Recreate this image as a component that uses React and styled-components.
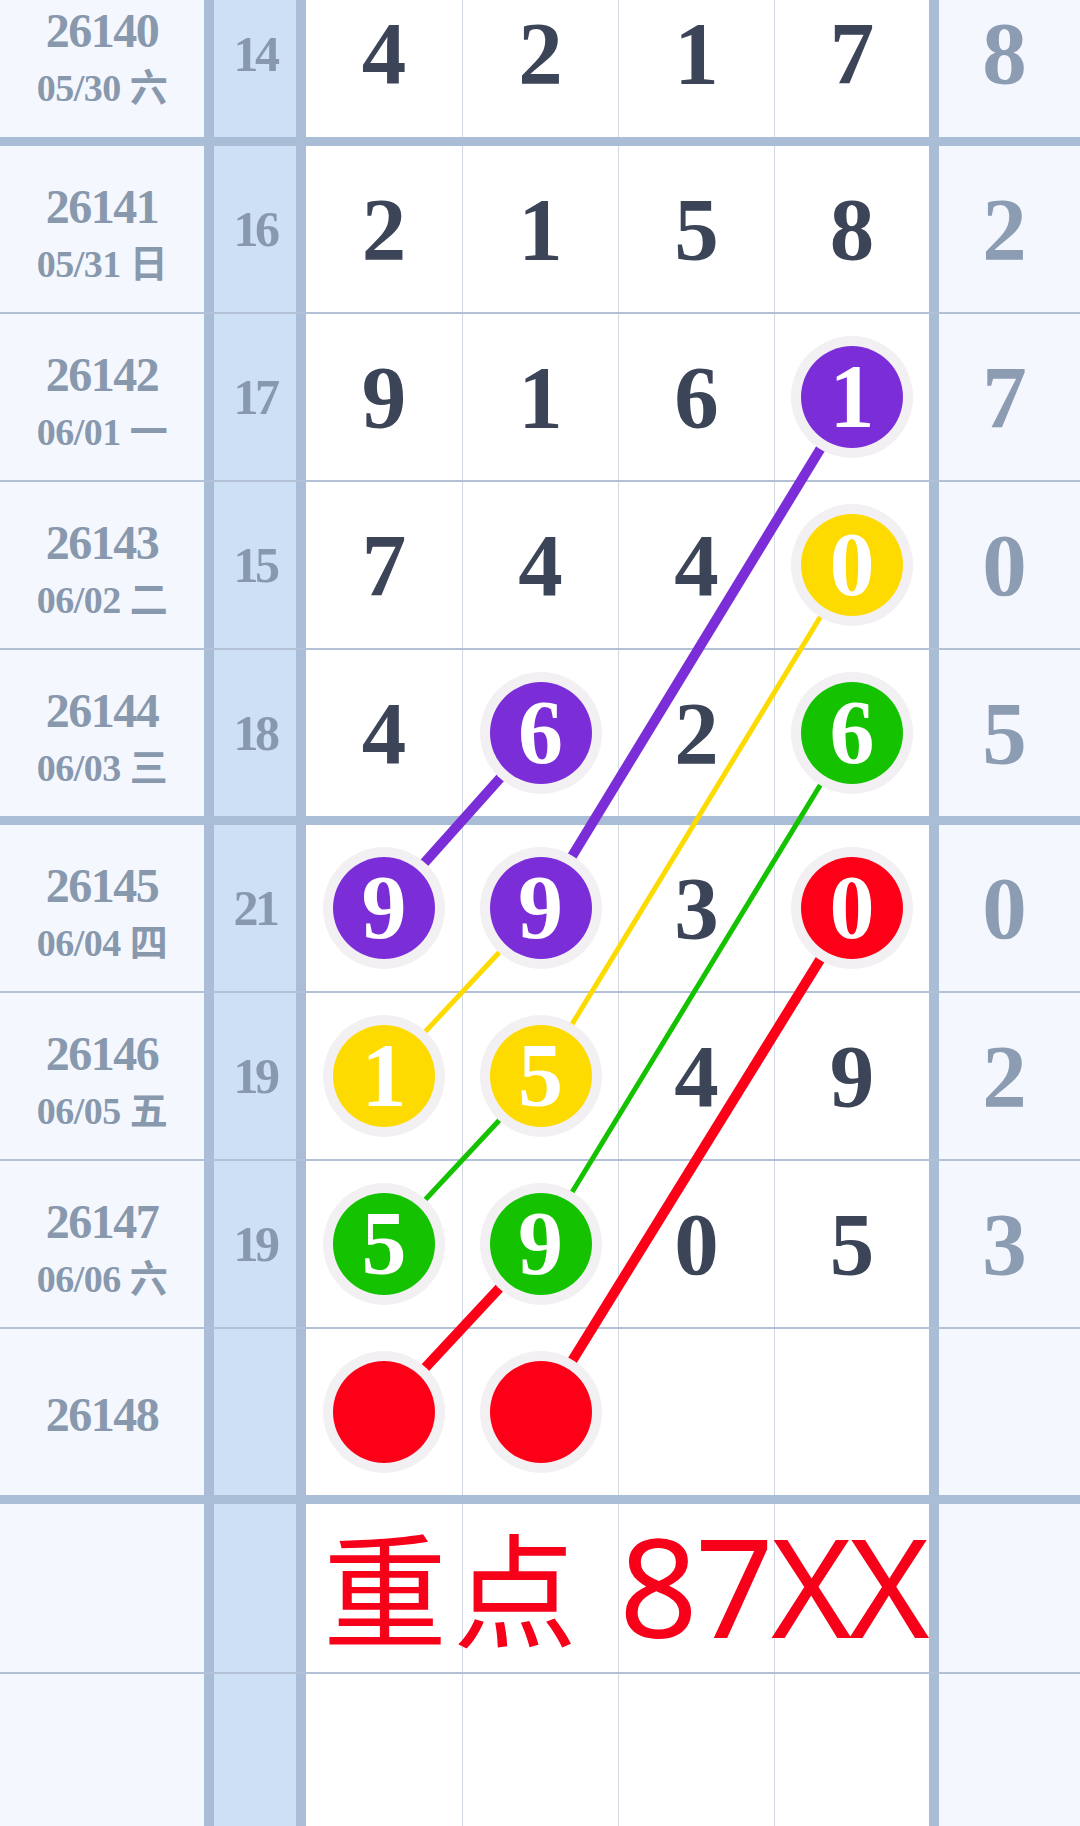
import React from "react";
import styled, { createGlobalStyle } from "styled-components";

const GlobalStyle = createGlobalStyle`
  html, body { margin: 0; padding: 0; background: #ffffff; }
  body { overflow: hidden; width: 1080px; height: 1826px; }
  #root { width: 1080px; }
`;

const THICK = "#a9bdd6";
const THIN = "#b2c1d6";
const DIVIDER = "#d3d9e2";
const SERIF = `"Liberation Serif", "Noto Sans CJK SC", serif`;

const NUM_W = [156, 155, 155, 154];
const NUM_X0 = 306;

const ROWS = [
  { h: 167, b: 9, issue: "26140", date: "05/30 六", sum: "14", nums: [4, 2, 1, 7], last: 8 },
  { h: 166, b: 2, issue: "26141", date: "05/31 日", sum: "16", nums: [2, 1, 5, 8], last: 2 },
  { h: 166, b: 2, issue: "26142", date: "06/01 一", sum: "17", nums: [9, 1, 6, { v: 1, c: "purple" }], last: 7 },
  { h: 166, b: 2, issue: "26143", date: "06/02 二", sum: "15", nums: [7, 4, 4, { v: 0, c: "yellow" }], last: 0 },
  { h: 166, b: 9, issue: "26144", date: "06/03 三", sum: "18", nums: [4, { v: 6, c: "purple" }, 2, { v: 6, c: "green" }], last: 5 },
  { h: 166, b: 2, issue: "26145", date: "06/04 四", sum: "21", nums: [{ v: 9, c: "purple" }, { v: 9, c: "purple" }, 3, { v: 0, c: "red" }], last: 0 },
  { h: 166, b: 2, issue: "26146", date: "06/05 五", sum: "19", nums: [{ v: 1, c: "yellow" }, { v: 5, c: "yellow" }, 4, 9], last: 2 },
  { h: 166, b: 2, issue: "26147", date: "06/06 六", sum: "19", nums: [{ v: 5, c: "green" }, { v: 9, c: "green" }, 0, 5], last: 3 },
  { h: 166, b: 9, issue: "26148", date: "", sum: "", nums: [{ v: "", c: "red" }, { v: "", c: "red" }, null, null], last: null },
  { h: 168, b: 2, issue: "", date: "", sum: "", nums: [null, null, null, null], last: null, banner: ["重点", "87XX"] },
  { h: 190, b: 0, issue: "", date: "", sum: "", nums: [null, null, null, null], last: null },
];

const BALL = {
  purple: "#7b2ed8",
  yellow: "#fedb00",
  green: "#14c200",
  red: "#fd0018",
};

const colCenter = (i) => {
  let x = NUM_X0;
  for (let k = 0; k < i; k++) x += NUM_W[k] + 1;
  return x + NUM_W[i] / 2;
};

const rowCenter = (i) => {
  let y = 0;
  for (let k = 0; k < i; k++) y += ROWS[k].h + ROWS[k].b;
  return y + ROWS[i].h / 2;
};

const LINKS = [
  { from: [2, 3], to: [5, 1], c: "purple", w: 10 },
  { from: [4, 1], to: [5, 0], c: "purple", w: 10 },
  { from: [3, 3], to: [6, 1], c: "yellow", w: 5 },
  { from: [5, 1], to: [6, 0], c: "yellow", w: 5 },
  { from: [4, 3], to: [7, 1], c: "green", w: 5 },
  { from: [6, 1], to: [7, 0], c: "green", w: 5 },
  { from: [5, 3], to: [8, 1], c: "red", w: 10 },
  { from: [7, 1], to: [8, 0], c: "red", w: 10 },
];

const Table = styled.div`
  position: relative;
  width: 1080px;
  margin-top: -30px;
`;

const Row = styled.div`
  display: flex;
  height: ${(p) => p.$h}px;
  border-bottom: ${(p) => p.$b}px solid ${(p) => (p.$b > 4 ? THICK : THIN)};
`;

const DateCell = styled.div`
  width: 204px;
  flex: none;
  background: #f4f7fd;
  display: flex;
  flex-direction: column;
  align-items: center;
  justify-content: center;
  padding-top: 6px;
  box-sizing: border-box;
  gap: 7px;
  color: #8898ad;
  font-family: ${SERIF};
  font-weight: 700;
`;

const Issue = styled.div`
  font-size: 48px;
  line-height: 56px;
  letter-spacing: -1.5px;
`;

const DateLine = styled.div`
  font-size: 38px;
  line-height: 44px;
  letter-spacing: -0.5px;
`;

const SumCell = styled.div`
  width: 82px;
  flex: none;
  background: #cde0f6;
  border-left: 10px solid ${THICK};
  border-right: 10px solid ${THICK};
  display: flex;
  align-items: center;
  justify-content: center;
  color: #8898ad;
  font-family: ${SERIF};
  font-weight: 700;
  font-size: 50px;
  letter-spacing: -3.5px;
`;

const NumArea = styled.div`
  position: relative;
  display: flex;
  flex: none;
  width: 623px;
  background: #ffffff;
`;

const NumCell = styled.div`
  width: ${(p) => p.$w}px;
  flex: none;
  display: flex;
  align-items: center;
  justify-content: center;
  border-right: ${(p) => (p.$last ? "none" : `1px solid ${DIVIDER}`)};
`;

const Digit = styled.span`
  font-family: ${SERIF};
  font-weight: 700;
  font-size: 89px;
  line-height: 1;
  color: ${(p) => p.$color || "#3c4457"};
`;

const Ball = styled.div`
  position: relative;
  z-index: 2;
  width: 102px;
  height: 102px;
  border-radius: 50%;
  background: ${(p) => p.$bg};
  box-shadow: 0 0 0 10px #f2f0f2;
  display: flex;
  align-items: center;
  justify-content: center;
  color: #ffffff;
  font-family: ${SERIF};
  font-weight: 700;
  font-size: 90px;
  line-height: 1;
`;

const LastCell = styled.div`
  flex: 1;
  background: #f4f7fd;
  border-left: 10px solid ${THICK};
  display: flex;
  align-items: center;
  justify-content: center;
  padding-right: 10px;
`;

const Banner = styled.div`
  position: absolute;
  left: 17px;
  top: 0;
  bottom: 0;
  display: flex;
  align-items: center;
  white-space: nowrap;
  color: #f6001a;
  line-height: 1;
  padding-bottom: 8px;
`;

const BannerCjk = styled.span`
  font-family: "Noto Sans CJK SC", sans-serif;
  font-weight: 400;
  font-size: 124px;
  letter-spacing: 6px;
`;

const BannerLatin = styled.span`
  font-family: "Noto Sans", "Open Sans", sans-serif;
  font-weight: 400;
  font-size: 138px;
  letter-spacing: -3px;
  margin-left: 36px;
`;

const Links = styled.svg`
  position: absolute;
  left: 0;
  top: 0;
  z-index: 1;
  pointer-events: none;
`;

function Cell({ item, index }) {
  const last = index === 3;
  let content = null;
  if (item !== null && typeof item === "object") {
    content = <Ball $bg={BALL[item.c]}>{item.v}</Ball>;
  } else if (item !== null) {
    content = <Digit>{item}</Digit>;
  }
  return (
    <NumCell $w={NUM_W[index]} $last={last}>
      {content}
    </NumCell>
  );
}

export default function App() {
  const total = ROWS.reduce((s, r) => s + r.h + r.b, 0);
  return (
    <>
      <GlobalStyle />
      <Table>
        {ROWS.map((r, i) => (
          <Row key={i} $h={r.h} $b={r.b}>
            <DateCell>
              {r.issue && <Issue>{r.issue}</Issue>}
              {r.date && <DateLine>{r.date}</DateLine>}
            </DateCell>
            <SumCell>{r.sum}</SumCell>
            <NumArea>
              {r.nums.map((n, j) => (
                <Cell key={j} item={n} index={j} />
              ))}
              {r.banner && (
                <Banner>
                  <BannerCjk>{r.banner[0]}</BannerCjk>
                  <BannerLatin>{r.banner[1]}</BannerLatin>
                </Banner>
              )}
            </NumArea>
            <LastCell>
              {r.last !== null && <Digit $color="#8c9cb2">{r.last}</Digit>}
            </LastCell>
          </Row>
        ))}
        <Links width="1080" height={total} viewBox={`0 0 1080 ${total}`}>
          {LINKS.map((l, k) => (
            <line
              key={k}
              x1={colCenter(l.from[1])}
              y1={rowCenter(l.from[0])}
              x2={colCenter(l.to[1])}
              y2={rowCenter(l.to[0])}
              stroke={BALL[l.c]}
              strokeWidth={l.w}
            />
          ))}
        </Links>
      </Table>
    </>
  );
}
